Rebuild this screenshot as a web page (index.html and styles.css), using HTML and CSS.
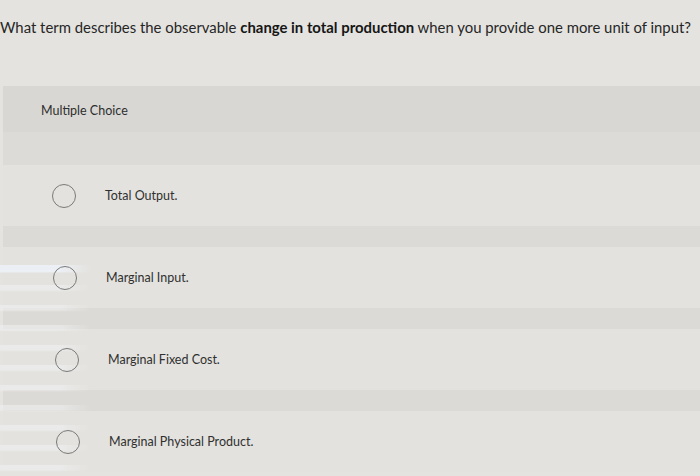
FILE: index.html
```html
<!DOCTYPE html>
<html lang="en">
<head>
<meta charset="utf-8">
<link rel="stylesheet" href="styles.css">
</head>
<body>
<div class="page">
  <p class="question">What term describes the observable <strong>change in total production</strong> when you provide one more unit of input?</p>
  <section class="panel">
    <div class="panel-head">Multiple Choice</div>
    <div class="spacer"></div>
    <ul class="options">
      <li class="option o1"><span class="radio"></span><span class="label">Total Output.</span></li>
      <li class="gap"></li>
      <li class="option o2"><span class="radio"></span><span class="label">Marginal Input.</span></li>
      <li class="gap"></li>
      <li class="option o3"><span class="radio"></span><span class="label">Marginal Fixed Cost.</span></li>
      <li class="gap"></li>
      <li class="option o4"><span class="radio"></span><span class="label">Marginal Physical Product.</span></li>
    </ul>
  </section>
</div>
</body>
</html>
```

FILE: styles.css
```css
html, body {
  margin: 0;
  padding: 0;
  background: #e4e3df;
  overflow: hidden;
}
.page {
  width: 700px;
  height: 476px;
  font-family: Lato, "Open Sans", sans-serif;
  color: #2a2a2a;
}
.question {
  margin: 0;
  padding: 18px 0 0 0;
  height: 86px;
  box-sizing: border-box;
  font-size: 14.9px;
  line-height: 18px;
  white-space: nowrap;
  color: #262626;
}
.question strong {
  font-weight: 700;
  color: #161616;
}
.panel {
  margin-left: 3px;
}
.panel-head {
  height: 46px;
  background: #d8d7d3;
  box-sizing: border-box;
  padding: 17px 0 0 38px;
  font-size: 12.5px;
  line-height: 16px;
  color: #2e2e2e;
}
.spacer {
  height: 33px;
  background: #dcdbd7;
}
.options {
  list-style: none;
  margin: 0;
  padding: 0;
  position: relative;
}
.options::before {
  content: "";
  position: absolute;
  left: -3px;
  top: 100px;
  width: 92px;
  height: 230px;
  background:
    linear-gradient(to bottom, rgba(236, 240, 246, 0.9) 0px, rgba(236, 240, 246, 0.9) 7px, transparent 8px),
    repeating-linear-gradient(to bottom,
      rgba(240, 241, 243, 0.55) 0px, rgba(240, 241, 243, 0.55) 5px,
      rgba(240, 241, 243, 0) 7px, rgba(240, 241, 243, 0) 20px);
  -webkit-mask-image: linear-gradient(to right, #000 65%, transparent);
  mask-image: linear-gradient(to right, #000 65%, transparent);
  pointer-events: none;
}
.option {
  height: 61px;
  display: flex;
  align-items: center;
  background: #e3e2de;
}
.gap {
  height: 21px;
  background: #dbdad6;
}
.radio {
  width: 22px;
  height: 22px;
  border: 1.6px solid #7a7a7a;
  border-radius: 50%;
  margin-left: 49px;
  flex: none;
  position: relative;
  z-index: 1;
}
.label {
  margin-left: 29px;
  font-size: 12.5px;
  color: #303030;
}
.o2 .radio { margin-left: 50px; }
.o3 .radio { margin-left: 52px; }
.o4 .radio { margin-left: 53px; }
```
